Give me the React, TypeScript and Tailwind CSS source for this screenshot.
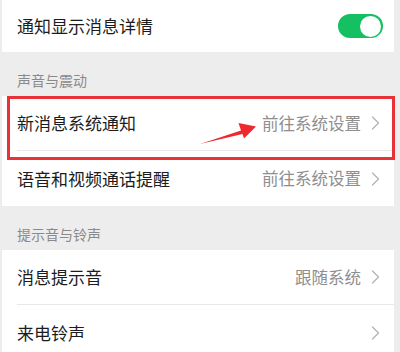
import React from 'react';

const Chevron = () => (
  <svg width="9" height="14" viewBox="0 0 9 14" fill="none" className="shrink-0">
    <path d="M1.5 1 L7.5 7 L1.5 13" stroke="#b5b5b5" strokeWidth="1.3" strokeLinecap="round" strokeLinejoin="round" />
  </svg>
);

interface RowProps {
  label: string;
  value?: string;
  divider?: boolean;
}

const Row: React.FC<RowProps> = ({ label, value, divider }) => (
  <div className="bg-white pl-[15px]">
    <div className={`h-[55px] flex items-center justify-between pr-[14px] ${divider ? 'border-b border-[#e8e8e8]' : ''}`}>
      <span className="text-[17px] text-[#1c1c1c]">{label}</span>
      <div className="flex items-center gap-[10px]">
        {value && <span className="text-[16.5px] text-[#8e8e8e]">{value}</span>}
        <Chevron />
      </div>
    </div>
  </div>
);

const SectionLabel = ({ text }: { text: string }) => (
  <div className="h-[44px] flex items-end pl-[15px] pb-[5px]">
    <span className="text-[14px] text-[#8a8a8a]">{text}</span>
  </div>
);

export default function App() {
  return (
    <div
      className="relative w-[400px] h-[352px] overflow-hidden bg-[#ededed]"
      style={{ fontFamily: '"Noto Sans CJK SC", "Noto Sans", sans-serif' }}
    >
      <div className="ml-[2px] mr-[6px]">
        <div className="bg-white h-[52px] flex items-center justify-between pl-[15px] pr-[11px]">
          <span className="text-[17px] text-[#1c1c1c]">通知显示消息详情</span>
          <div className="w-[45px] h-[24px] rounded-full bg-[#15c062] flex items-center justify-end pr-[2px]">
            <div className="w-[21px] h-[21px] rounded-full bg-white" />
          </div>
        </div>

        <SectionLabel text="声音与震动" />
        <Row label="新消息系统通知" value="前往系统设置" divider />
        <Row label="语音和视频通话提醒" value="前往系统设置" />

        <SectionLabel text="提示音与铃声" />
        <Row label="消息提示音" value="跟随系统" divider />
        <Row label="来电铃声" />
      </div>

      {/* annotation: red box + arrow */}
      <div className="absolute left-[7px] top-[96px] w-[388px] h-[64px] border-[3px] border-[#e8323a]" />
      <svg className="absolute left-0 top-0" width="400" height="352" viewBox="0 0 400 352">
        <polygon
          points="200,144 241,130.5 238.5,123 256,126.5 244,138.5 242.5,134"
          fill="#ee2a2f"
        />
      </svg>
    </div>
  );
}
